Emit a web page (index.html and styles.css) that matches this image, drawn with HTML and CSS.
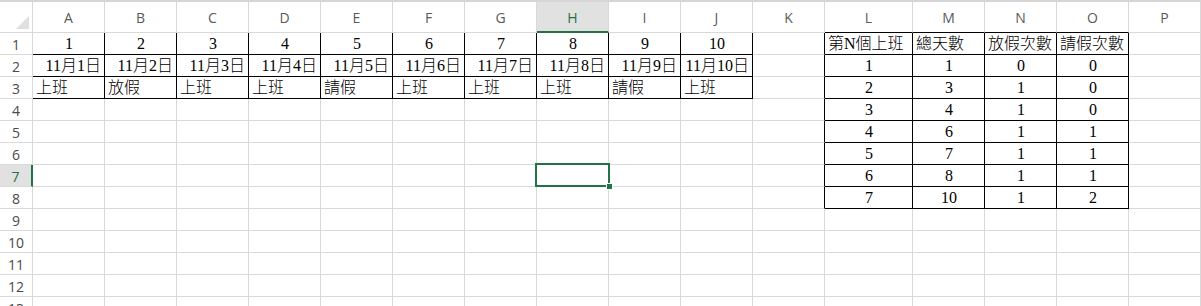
FILE: index.html
```html
<!DOCTYPE html>
<html lang="zh-Hant">
<head>
<meta charset="utf-8">
<title>Sheet</title>
<link rel="stylesheet" href="styles.css">
</head>
<body>
<div class="topline"></div>
<div class="sheet">
  <div class="corner"><span class="tri"></span></div>
  <div class="ch">A</div><div class="ch">B</div><div class="ch">C</div><div class="ch">D</div><div class="ch">E</div><div class="ch">F</div><div class="ch">G</div><div class="ch sel">H</div><div class="ch">I</div><div class="ch">J</div><div class="ch">K</div><div class="ch bb">L</div><div class="ch bb">M</div><div class="ch bb">N</div><div class="ch bb">O</div><div class="ch">P</div>

  <div class="rh">1</div>
  <div class="c b ctr">1</div><div class="c b ctr">2</div><div class="c b ctr">3</div><div class="c b ctr">4</div><div class="c b ctr">5</div><div class="c b ctr">6</div><div class="c b ctr">7</div><div class="c b ctr">8</div><div class="c b ctr">9</div><div class="c b ctr">10</div>
  <div class="c br"></div><div class="c b">第N個上班</div><div class="c b">總天數</div><div class="c b">放假次數</div><div class="c b">請假次數</div><div class="c"></div>

  <div class="rh">2</div>
  <div class="c b rt">11月1日</div><div class="c b rt">11月2日</div><div class="c b rt">11月3日</div><div class="c b rt">11月4日</div><div class="c b rt">11月5日</div><div class="c b rt">11月6日</div><div class="c b rt">11月7日</div><div class="c b rt">11月8日</div><div class="c b rt">11月9日</div><div class="c b rt">11月10日</div>
  <div class="c br"></div><div class="c b ctr">1</div><div class="c b ctr">1</div><div class="c b ctr">0</div><div class="c b ctr">0</div><div class="c"></div>

  <div class="rh">3</div>
  <div class="c b">上班</div><div class="c b">放假</div><div class="c b">上班</div><div class="c b">上班</div><div class="c b">請假</div><div class="c b">上班</div><div class="c b">上班</div><div class="c b">上班</div><div class="c b">請假</div><div class="c b">上班</div>
  <div class="c br"></div><div class="c b ctr">2</div><div class="c b ctr">3</div><div class="c b ctr">1</div><div class="c b ctr">0</div><div class="c"></div>

  <div class="rh">4</div>
  <div class="c"></div><div class="c"></div><div class="c"></div><div class="c"></div><div class="c"></div><div class="c"></div><div class="c"></div><div class="c"></div><div class="c"></div><div class="c"></div>
  <div class="c br"></div><div class="c b ctr">3</div><div class="c b ctr">4</div><div class="c b ctr">1</div><div class="c b ctr">0</div><div class="c"></div>

  <div class="rh">5</div>
  <div class="c"></div><div class="c"></div><div class="c"></div><div class="c"></div><div class="c"></div><div class="c"></div><div class="c"></div><div class="c"></div><div class="c"></div><div class="c"></div>
  <div class="c br"></div><div class="c b ctr">4</div><div class="c b ctr">6</div><div class="c b ctr">1</div><div class="c b ctr">1</div><div class="c"></div>

  <div class="rh">6</div>
  <div class="c"></div><div class="c"></div><div class="c"></div><div class="c"></div><div class="c"></div><div class="c"></div><div class="c"></div><div class="c"></div><div class="c"></div><div class="c"></div>
  <div class="c br"></div><div class="c b ctr">5</div><div class="c b ctr">7</div><div class="c b ctr">1</div><div class="c b ctr">1</div><div class="c"></div>

  <div class="rh selr">7</div>
  <div class="c"></div><div class="c"></div><div class="c"></div><div class="c"></div><div class="c"></div><div class="c"></div><div class="c"></div><div class="c active"><span class="cursor"><span class="handle"></span></span></div><div class="c"></div><div class="c"></div>
  <div class="c br"></div><div class="c b ctr">6</div><div class="c b ctr">8</div><div class="c b ctr">1</div><div class="c b ctr">1</div><div class="c"></div>

  <div class="rh">8</div>
  <div class="c"></div><div class="c"></div><div class="c"></div><div class="c"></div><div class="c"></div><div class="c"></div><div class="c"></div><div class="c"></div><div class="c"></div><div class="c"></div>
  <div class="c br"></div><div class="c b ctr">7</div><div class="c b ctr">10</div><div class="c b ctr">1</div><div class="c b ctr">2</div><div class="c"></div>

  <div class="rh">9</div>
  <div class="c"></div><div class="c"></div><div class="c"></div><div class="c"></div><div class="c"></div><div class="c"></div><div class="c"></div><div class="c"></div><div class="c"></div><div class="c"></div><div class="c"></div><div class="c"></div><div class="c"></div><div class="c"></div><div class="c"></div><div class="c"></div>

  <div class="rh">10</div>
  <div class="c"></div><div class="c"></div><div class="c"></div><div class="c"></div><div class="c"></div><div class="c"></div><div class="c"></div><div class="c"></div><div class="c"></div><div class="c"></div><div class="c"></div><div class="c"></div><div class="c"></div><div class="c"></div><div class="c"></div><div class="c"></div>

  <div class="rh">11</div>
  <div class="c"></div><div class="c"></div><div class="c"></div><div class="c"></div><div class="c"></div><div class="c"></div><div class="c"></div><div class="c"></div><div class="c"></div><div class="c"></div><div class="c"></div><div class="c"></div><div class="c"></div><div class="c"></div><div class="c"></div><div class="c"></div>

  <div class="rh">12</div>
  <div class="c"></div><div class="c"></div><div class="c"></div><div class="c"></div><div class="c"></div><div class="c"></div><div class="c"></div><div class="c"></div><div class="c"></div><div class="c"></div><div class="c"></div><div class="c"></div><div class="c"></div><div class="c"></div><div class="c"></div><div class="c"></div>

  <div class="rh">13</div>
  <div class="c"></div><div class="c"></div><div class="c"></div><div class="c"></div><div class="c"></div><div class="c"></div><div class="c"></div><div class="c"></div><div class="c"></div><div class="c"></div><div class="c"></div><div class="c"></div><div class="c"></div><div class="c"></div><div class="c"></div><div class="c"></div>
</div>
</body>
</html>
```

FILE: styles.css
```css
html, body {
  margin: 0;
  padding: 0;
  background: #ffffff;
  overflow: hidden;
}

.topline {
  height: 2px;
  background: #d6d6d6;
}

.sheet {
  display: grid;
  grid-template-columns: 33px repeat(11, 72px) 88px repeat(4, 72px);
  grid-template-rows: 31px repeat(13, 22px);
  width: 1201px;
}

.sheet > div {
  box-sizing: border-box;
  border-right: 1px solid #d9d9d9;
  border-bottom: 1px solid #d9d9d9;
}

.corner {
  position: relative;
  background: #ffffff;
}

.tri {
  position: absolute;
  right: 3px;
  bottom: 3px;
  width: 0;
  height: 0;
  border-left: 13px solid transparent;
  border-bottom: 13px solid #dfdfdf;
}

.ch {
  display: flex;
  align-items: center;
  justify-content: center;
  font-family: "Open Sans", "Noto Sans", sans-serif;
  font-size: 14px;
  color: #5a5a5a;
  padding-top: 1px;
}

.ch.sel {
  background: #e1e1e1;
  color: #217346;
  border-bottom: 2px solid #217346;
}

.rh {
  display: flex;
  align-items: center;
  justify-content: center;
  font-family: "Open Sans", "Noto Sans", sans-serif;
  font-size: 14px;
  color: #4a4a4a;
  padding-top: 1px;
}

.rh.selr {
  background: #e1e1e1;
  color: #217346;
  border-right: 2px solid #217346;
}

.c {
  display: flex;
  align-items: flex-end;
  justify-content: flex-start;
  padding: 0 2px 0 3px;
  font-family: "Liberation Serif", "Noto Sans CJK TC", serif;
  font-size: 16px;
  font-weight: 300;
  line-height: 20px;
  color: #000000;
  white-space: nowrap;
}

.sheet > .b {
  border-right: 1px solid #000000;
  border-bottom: 1px solid #000000;
}

.sheet > .br {
  border-right: 1px solid #000000;
}

.sheet > .bb {
  border-bottom: 1px solid #000000;
}

.ctr {
  justify-content: center;
}

.rt {
  justify-content: flex-end;
  padding-right: 3px;
}

.active {
  position: relative;
}

.cursor {
  position: absolute;
  left: -2px;
  top: -2px;
  right: -2px;
  bottom: -1px;
  border: 2px solid #217346;
  z-index: 2;
}

.handle {
  position: absolute;
  right: -5px;
  bottom: -5px;
  width: 5px;
  height: 5px;
  background: #217346;
  border: 1px solid #ffffff;
}
```
